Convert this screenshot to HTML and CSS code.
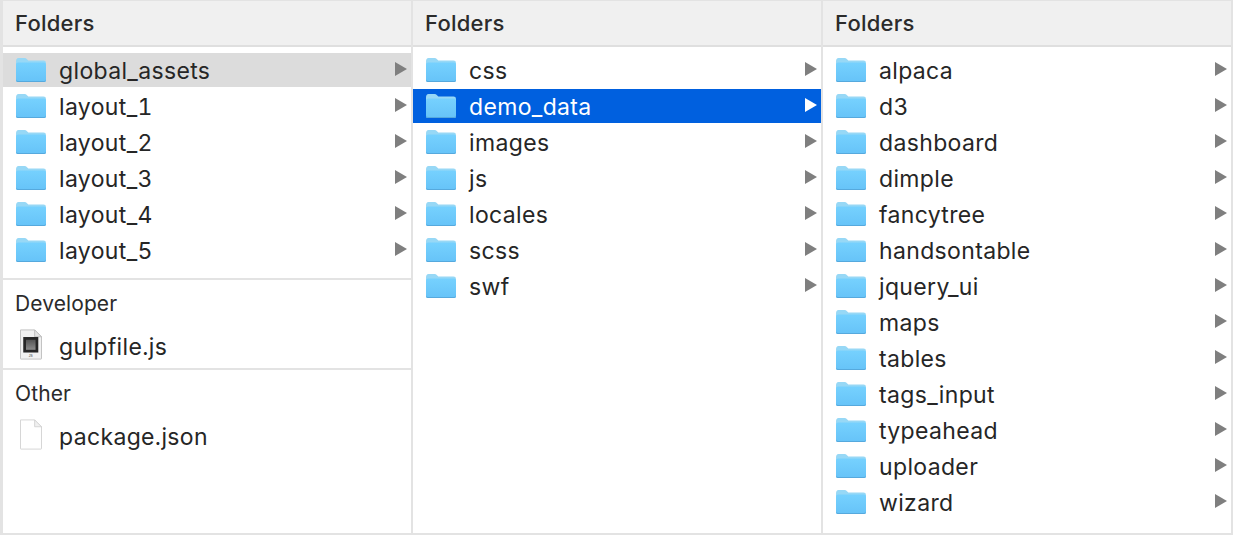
FILE: index.html
```html
<!DOCTYPE html>
<html lang="en">
<head>
<meta charset="utf-8">
<title>Finder columns</title>
<link rel="stylesheet" href="styles.css">
</head>
<body>
<svg class="defs" width="0" height="0" aria-hidden="true">
  <defs>
    <linearGradient id="fb" x1="0" y1="0" x2="0" y2="1">
      <stop offset="0" stop-color="#76d1fe"/>
      <stop offset="1" stop-color="#66c3f8"/>
    </linearGradient>
    <linearGradient id="scr" x1="0" y1="0" x2="0" y2="1">
      <stop offset="0" stop-color="#555"/>
      <stop offset="1" stop-color="#8c8c8c"/>
    </linearGradient>
    <symbol id="folder" viewBox="0 0 32 26">
      <path d="M1 4.5Q1 1 3.5 1H9.5Q11 1 12 2.2L13.3 3.6H28.5Q31 3.6 31 6V23Q31 25 29 25H3Q1 25 1 23Z" fill="#97d8f6"/>
      <path d="M1 7.2Q1 5.6 3 5.6H29Q31 5.6 31 7.2V23Q31 25 29 25H3Q1 25 1 23Z" fill="url(#fb)"/>
      <path d="M1 22.6V23Q1 25 3 25H29Q31 25 31 23V22.6Q31 24 29 24H3Q1 24 1 22.6Z" fill="#56a9dd"/>
    </symbol>
    <symbol id="page" viewBox="0 0 26 34">
      <path d="M1.5 1H17L24.5 8.5V32.5Q24.5 33 24 33H2Q1.5 33 1.5 32.5Z" fill="#fff" stroke="#d2d2d2"/>
      <path d="M17 1V8.5H24.5Z" fill="#f0f0f0" stroke="#d2d2d2"/>
    </symbol>
    <symbol id="jsfile" viewBox="0 0 26 34">
      <path d="M1.5 1H17L24.5 8.5V32.5Q24.5 33 24 33H2Q1.5 33 1.5 32.5Z" fill="#f1f1f1" stroke="#bdbdbd"/>
      <path d="M17 1V8.5H24.5Z" fill="#e4e4e4" stroke="#bdbdbd"/>
      <rect x="4.5" y="8.8" width="16.5" height="17" fill="#262626"/>
      <rect x="7.5" y="11.8" width="10.5" height="11" fill="url(#scr)"/>
      <text x="12.8" y="31" class="js-label">JS</text>
    </symbol>
  </defs>
</svg>
<main class="browser">
  <section class="column">
    <h2 class="head">Folders</h2>
    <ul class="list">
      <li class="row inactive"><svg class="icon"><use href="#folder"/></svg><span class="name">global_assets</span><i class="arrow"></i></li>
      <li class="row"><svg class="icon"><use href="#folder"/></svg><span class="name">layout_1</span><i class="arrow"></i></li>
      <li class="row"><svg class="icon"><use href="#folder"/></svg><span class="name">layout_2</span><i class="arrow"></i></li>
      <li class="row"><svg class="icon"><use href="#folder"/></svg><span class="name">layout_3</span><i class="arrow"></i></li>
      <li class="row"><svg class="icon"><use href="#folder"/></svg><span class="name">layout_4</span><i class="arrow"></i></li>
      <li class="row"><svg class="icon"><use href="#folder"/></svg><span class="name">layout_5</span><i class="arrow"></i></li>
    </ul>
    <div class="group">
      <h3 class="group-title">Developer</h3>
      <div class="row file"><svg class="doc"><use href="#jsfile"/></svg><span class="name">gulpfile.js</span></div>
    </div>
    <div class="group">
      <h3 class="group-title">Other</h3>
      <div class="row file"><svg class="doc"><use href="#page"/></svg><span class="name">package.json</span></div>
    </div>
  </section>
  <section class="column">
    <h2 class="head">Folders</h2>
    <ul class="list">
      <li class="row"><svg class="icon"><use href="#folder"/></svg><span class="name">css</span><i class="arrow"></i></li>
      <li class="row active"><svg class="icon"><use href="#folder"/></svg><span class="name">demo_data</span><i class="arrow"></i></li>
      <li class="row"><svg class="icon"><use href="#folder"/></svg><span class="name">images</span><i class="arrow"></i></li>
      <li class="row"><svg class="icon"><use href="#folder"/></svg><span class="name">js</span><i class="arrow"></i></li>
      <li class="row"><svg class="icon"><use href="#folder"/></svg><span class="name">locales</span><i class="arrow"></i></li>
      <li class="row"><svg class="icon"><use href="#folder"/></svg><span class="name">scss</span><i class="arrow"></i></li>
      <li class="row"><svg class="icon"><use href="#folder"/></svg><span class="name">swf</span><i class="arrow"></i></li>
    </ul>
  </section>
  <section class="column">
    <h2 class="head">Folders</h2>
    <ul class="list">
      <li class="row"><svg class="icon"><use href="#folder"/></svg><span class="name">alpaca</span><i class="arrow"></i></li>
      <li class="row"><svg class="icon"><use href="#folder"/></svg><span class="name">d3</span><i class="arrow"></i></li>
      <li class="row"><svg class="icon"><use href="#folder"/></svg><span class="name">dashboard</span><i class="arrow"></i></li>
      <li class="row"><svg class="icon"><use href="#folder"/></svg><span class="name">dimple</span><i class="arrow"></i></li>
      <li class="row"><svg class="icon"><use href="#folder"/></svg><span class="name">fancytree</span><i class="arrow"></i></li>
      <li class="row"><svg class="icon"><use href="#folder"/></svg><span class="name">handsontable</span><i class="arrow"></i></li>
      <li class="row"><svg class="icon"><use href="#folder"/></svg><span class="name">jquery_ui</span><i class="arrow"></i></li>
      <li class="row"><svg class="icon"><use href="#folder"/></svg><span class="name">maps</span><i class="arrow"></i></li>
      <li class="row"><svg class="icon"><use href="#folder"/></svg><span class="name">tables</span><i class="arrow"></i></li>
      <li class="row"><svg class="icon"><use href="#folder"/></svg><span class="name">tags_input</span><i class="arrow"></i></li>
      <li class="row"><svg class="icon"><use href="#folder"/></svg><span class="name">typeahead</span><i class="arrow"></i></li>
      <li class="row"><svg class="icon"><use href="#folder"/></svg><span class="name">uploader</span><i class="arrow"></i></li>
      <li class="row"><svg class="icon"><use href="#folder"/></svg><span class="name">wizard</span><i class="arrow"></i></li>
    </ul>
  </section>
</main>
</body>
</html>
```
FILE: styles.css
```css
* { box-sizing: border-box; }
html, body { margin: 0; height: 100%; background: #fff; overflow: hidden; }
.defs { position: absolute; }
.browser {
  display: grid;
  grid-template-columns: 408px 408px 408px;
  column-gap: 2px;
  width: 1233px;
  height: 535px;
  padding: 1px 2px 2px 3px;
  background: #e3e3e3;
  font-family: Inter, "Liberation Sans", sans-serif;
  font-feature-settings: "tnum";
  color: #262626;
}
.column { background: #fff; min-width: 0; overflow: hidden; }
.head {
  margin: 0;
  height: 46px;
  padding: 0 12px;
  display: flex;
  align-items: center;
  background: #f0f0f0;
  border-bottom: 2px solid #dfdfdf;
  font-size: 22px;
  font-weight: 500;
  letter-spacing: 0.25px;
  color: #2b2b2b;
}
.list { list-style: none; margin: 0; padding: 6px 0 11px; display: flex; flex-direction: column; gap: 2px; }
.row {
  height: 34px;
  display: flex;
  align-items: center;
  padding: 0 4px 0 12px;
  font-size: 23px;
}
.icon { width: 32px; height: 26px; margin-right: 12px; flex: none; }
.name { flex: 1; min-width: 0; white-space: nowrap; letter-spacing: 0.35px; padding-top: 2px; }
.arrow {
  width: 0; height: 0; flex: none;
  margin-bottom: 2px;
  border-left: 12px solid #7f7f7f;
  border-top: 7px solid transparent;
  border-bottom: 7px solid transparent;
}
.inactive { background: #dcdcdc; }
.active { background: #0060df; color: #fff; }
.active .arrow { border-left-color: #fff; }
.group { border-top: 2px solid #e3e3e3; height: 90px; padding-top: 9px; }
.group-title { margin: 0; height: 28px; padding: 0 12px; display: flex; align-items: center; font-size: 21px; font-weight: 400; letter-spacing: 0.1px; color: #2b2b2b; }
.file { margin-top: 12px; }
.doc { width: 24px; height: 31px; margin: 0 16px 3px 4px; flex: none; }
.js-label { font-size: 3.5px; font-family: "Liberation Sans", sans-serif; font-weight: 700; fill: #777; text-anchor: middle; }
```
